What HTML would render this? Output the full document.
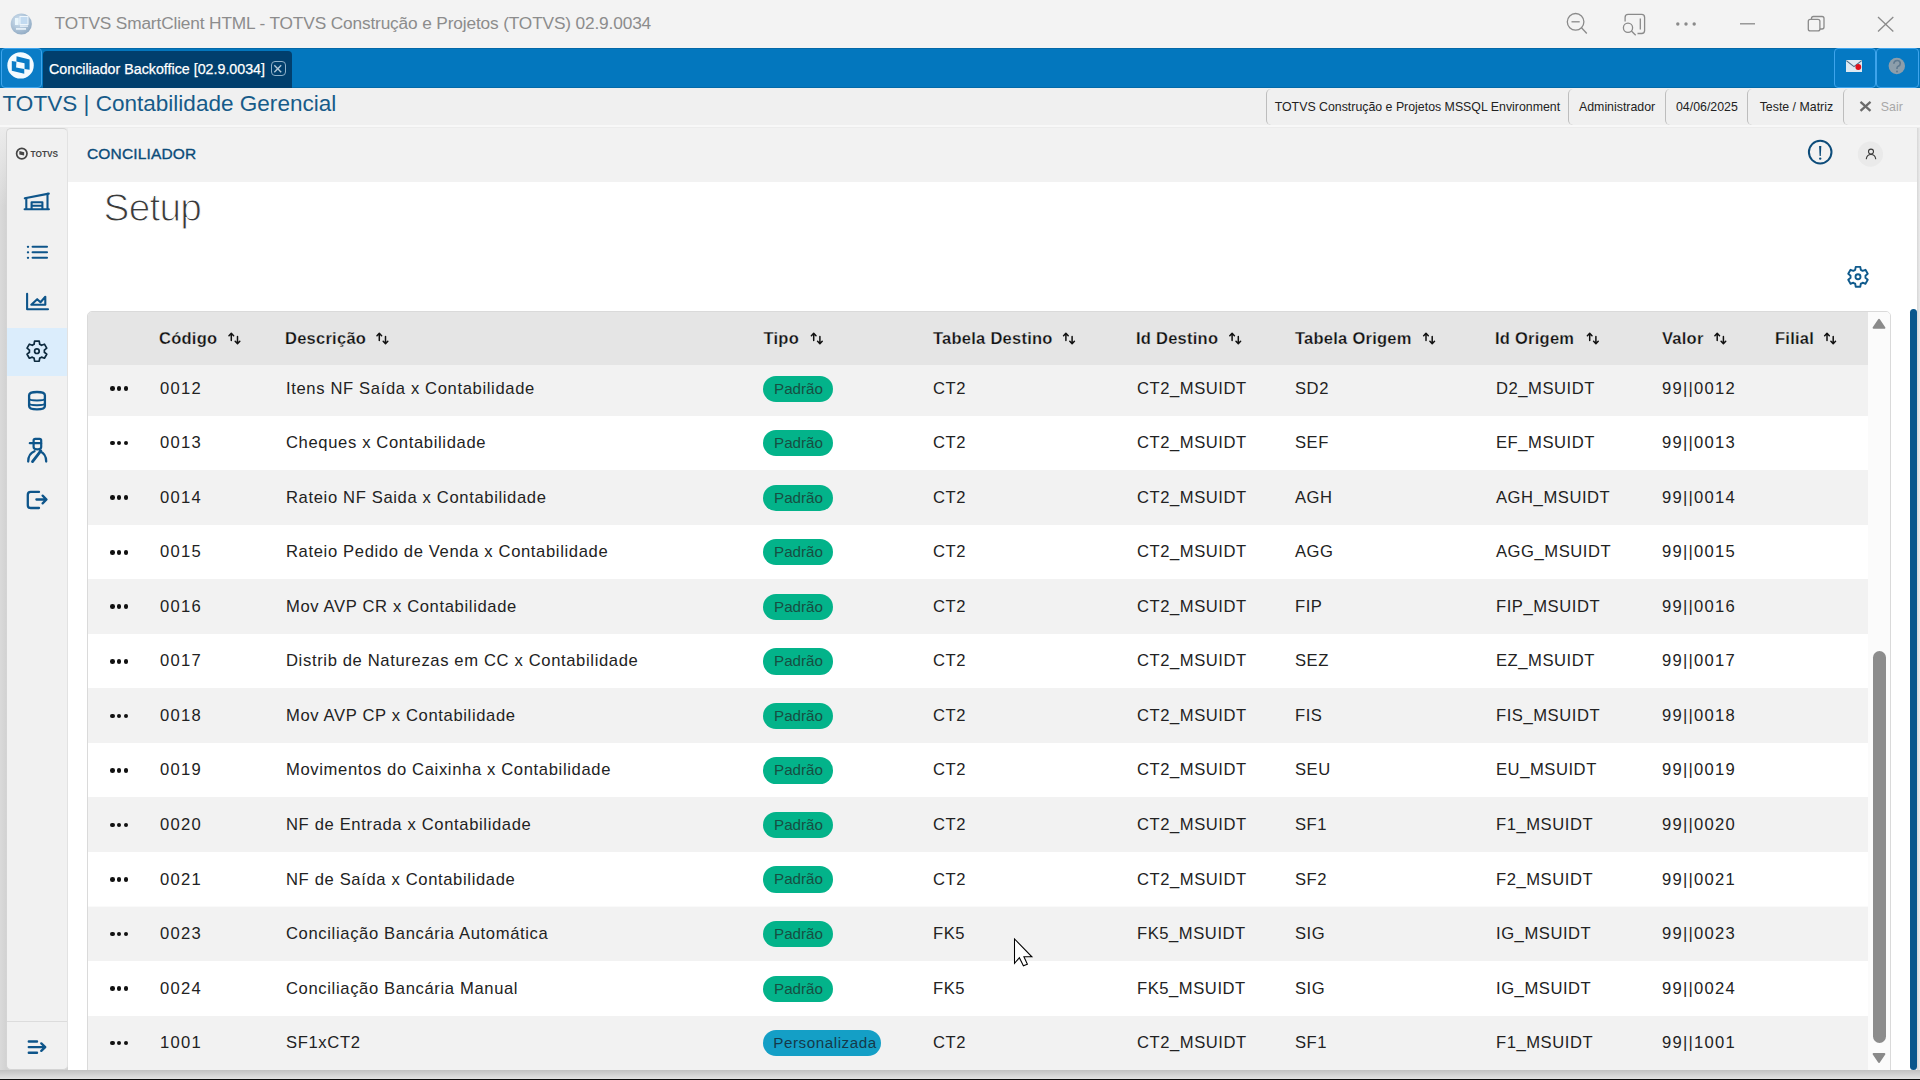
<!DOCTYPE html>
<html><head><meta charset="utf-8">
<style>
*{box-sizing:border-box;margin:0;padding:0}
html,body{width:1920px;height:1080px;overflow:hidden;background:#f3f3f3;font-family:"Liberation Sans",sans-serif;position:relative}
.abs{position:absolute}
svg{position:absolute;overflow:visible}
#ttl{left:54.6px;top:14.8px;font-size:17.3px;line-height:1;color:#8c8c8c;white-space:nowrap;letter-spacing:-0.15px}
#bluebar{left:0;top:47.6px;width:1920px;height:40.4px;background:#0377be;border-top:1px solid #0468a8;border-bottom:1px solid #036aa9}
#logobox{left:1px;top:48px;width:41px;height:40px;background:#0a7cc6;border:1px solid #3ea4ec;border-radius:4px}
#tab{left:43px;top:50.8px;width:249px;height:37px;background:#013f6d;border-radius:4px 4px 0 0}
#tabtxt{left:49px;top:62px;font-size:14.25px;line-height:1;color:#fff;-webkit-text-stroke:0.25px #fff;white-space:nowrap}
#tabx{left:270.5px;top:61px;width:15px;height:15px;border:1.3px solid #8fb0c8;border-radius:4px}
.tbtn{top:48px;width:42px;height:40px;border:1px solid #3ea4ec;border-radius:4px;background:#0579c3}
#hdr{left:0;top:88px;width:1920px;height:37px;background:#f0f0f0}
#hdrline{left:0;top:125px;width:1920px;height:2px;background:#f8f8f8}
#apptitle{left:2.5px;top:92.8px;font-size:22.55px;line-height:1;color:#175b89;white-space:nowrap}
.htab{top:88.6px;height:36px;border-left:1px solid #bdbdbd;border-radius:5px 0 0 5px;font-size:12.35px;line-height:36px;color:#222;white-space:nowrap;padding-left:8px}
#main{left:0;top:127px;width:1920px;height:953px;background:linear-gradient(180deg,#ececec 0px,rgba(236,236,236,0) 80px),linear-gradient(90deg,#dadada,#d2d2d2 6px)}
#sidebar{left:6px;top:128px;width:62px;height:942px;background:#f1f1f1;border:1px solid #d4d4d4;border-right-color:#e2e2e2;border-radius:5px}
#sbactive{left:7px;top:328px;width:60px;height:48px;background:#dbedfc}
#sbsep{left:7px;top:1021px;width:60px;height:1px;background:#dcdcdc}
#topbar{left:68px;top:128px;width:1849px;height:54px;background:#f2f2f2}
#content{left:68px;top:182px;width:1849px;height:888px;background:#fff}
#rightstrip{left:1917px;top:128px;width:3px;height:942px;background:linear-gradient(90deg,#d6d6d6,#ececec)}
#conc{left:87px;top:145.6px;font-size:15.5px;line-height:1;color:#0b4c79;-webkit-text-stroke:0.35px #0b4c79;letter-spacing:0.15px;white-space:nowrap}
#setup{left:103.5px;top:189.3px;font-size:38.8px;line-height:1;color:#3a3a3a;letter-spacing:-0.75px;-webkit-text-stroke:1.1px #fff;white-space:nowrap}
#tblbox{left:86.5px;top:310.5px;width:1804px;height:770px;border:1px solid #dadada;border-radius:5px;background:#fafafa}
#rows{left:0;top:0;width:0;height:0}
.row{position:absolute;left:88px;width:1780px;height:54.545px}
.c{position:absolute;top:0.6px;line-height:54.545px;font-size:16.6px;letter-spacing:0.55px;color:#222;white-space:nowrap}
.dots{position:absolute;top:25.2px;height:5px;width:18.2px;display:flex;justify-content:space-between}
.dots i{display:block;width:4.7px;height:4.7px;border-radius:50%;background:#111}
.tag{position:absolute;top:14.5px;height:26.3px;border-radius:13.2px;font-size:15.2px;line-height:26.3px;padding:0 0 0 11px;color:#174f42;white-space:nowrap}
.tag.p{background:#03b38a;width:70px}
.tag.c{background:#149fc6;color:#15394a;width:118px;padding-left:10.3px}
#thead{left:88px;top:311.5px;width:1780px;height:53px;background:#e5e5e5;border-radius:4px 0 0 0}
.h{position:absolute;top:0px;line-height:53.5px;font-size:16.5px;font-weight:700;color:#111;white-space:nowrap;letter-spacing:0.25px;-webkit-text-stroke:0.25px #e5e5e5}
.h svg{position:relative;display:inline-block;vertical-align:middle}
#sbtrack{left:1868px;top:311.5px;width:21.5px;height:758px;background:#fbfbfb;border-radius:0 4px 0 0}
#thumb{left:1873px;top:651px;width:13px;height:392px;background:#8c8c8c;border-radius:6.5px}
#outerbar{left:1909.5px;top:309px;width:7.5px;height:761px;background:#09578c;border-radius:4px}
#bottomshadow{left:0;top:1070px;width:1920px;height:9px;background:linear-gradient(#c2c2c2,#e4e4e4)}
#bottomline{left:0;top:1079px;width:1920px;height:1px;background:#111}
</style></head><body>
<!-- title bar -->
<svg style="left:0;top:0" width="1920" height="47">
 <defs><radialGradient id="ag" cx="0.4" cy="0.35" r="0.7"><stop offset="0" stop-color="#d6e6f4"/><stop offset="1" stop-color="#8fa9c2"/></radialGradient></defs>
 <circle cx="21.3" cy="24" r="10.6" fill="url(#ag)"/>
 <rect x="15" y="18" width="3.5" height="7" fill="#eaf6fc"/>
 <rect x="20" y="16.5" width="8" height="8" fill="#c2daf0" stroke="#eef6fc" stroke-width="1"/>
 <rect x="20" y="25.5" width="8" height="1.2" fill="#eef6fc"/>
 <rect x="16" y="28" width="10" height="1.8" fill="#e6f0f8"/>
 <g fill="none" stroke="#8a8a8a" stroke-width="1.3">
  <circle cx="1575.6" cy="21.8" r="8.3"/>
  <line x1="1571.5" y1="21.8" x2="1579.7" y2="21.8"/>
  <line x1="1581.5" y1="27.7" x2="1586.8" y2="33.5"/>
  <path d="M1625.1 21.6 V17.4 q0-3 3-3 H1641.6 q3 0 3 3 V30.5 q0 3 -3 3 H1637.5"/>
  <line x1="1640.3" y1="18.4" x2="1640.3" y2="29.6"/>
  <circle cx="1628" cy="27.7" r="4.6"/>
  <line x1="1631.4" y1="31" x2="1635.7" y2="35.3"/>
  <line x1="1740" y1="23.8" x2="1755" y2="23.8"/>
  <rect x="1808.3" y="19.3" width="11.6" height="11.6" rx="2"/>
  <path d="M1811.5 19 V18.5 q0-2 2-2 H1822 q2 0 2 2 V27 q0 2 -2 2 H1820"/>
  <line x1="1878" y1="17" x2="1893.3" y2="31.5"/>
  <line x1="1893.3" y1="17" x2="1878" y2="31.5"/>
 </g>
 <g fill="#8a8a8a"><circle cx="1677.8" cy="24" r="1.7"/><circle cx="1686" cy="24" r="1.7"/><circle cx="1694.2" cy="24" r="1.7"/></g>
</svg>
<div id="ttl" class="abs">TOTVS SmartClient HTML - TOTVS Construção e Projetos (TOTVS) 02.9.0034</div>
<!-- blue bar -->
<div id="bluebar" class="abs"></div>
<div id="logobox" class="abs"></div>
<svg style="left:0;top:47px" width="45" height="41">
 <circle cx="20.56" cy="18.4" r="13.2" fill="#f4fbff"/>
 <path d="M16.56 9.37 L29.6 12.48 L29.6 22.85 L24.56 21.96 L24.56 16.33 L16.4 14.56 Z" fill="#0a7cc6"/>
 <path d="M11.8 14.1 L16.4 14.85 L16.1 20.48 L24.26 21.96 L24.26 26.7 L11.8 23.74 Z" fill="#0a7cc6"/>
</svg>
<div id="tab" class="abs"></div>
<div id="tabtxt" class="abs">Conciliador Backoffice [02.9.0034]</div>
<div id="tabx" class="abs"></div>
<svg style="left:270px;top:61px" width="16" height="16"><g stroke="#b3c8d8" stroke-width="1.4"><line x1="4.3" y1="4.3" x2="11.2" y2="11.2"/><line x1="11.2" y1="4.3" x2="4.3" y2="11.2"/></g></svg>
<div class="abs tbtn" style="left:1834px"></div>
<div class="abs tbtn" style="left:1876px;width:43px"></div>
<svg style="left:1830px;top:47px" width="90" height="41">
 <rect x="16" y="13" width="16" height="12" fill="#dfe9f1"/>
 <path d="M16.3 13.6 L24 19.6 L31.7 13.6" fill="none" stroke="#4f6f88" stroke-width="1.2"/>
 <circle cx="28.3" cy="20" r="2.9" fill="#e0101a"/>
 <circle cx="66.8" cy="19" r="8.2" fill="#8d9eab"/>
 <path d="M63.8 16.8 q0.3-3.3 3.3-3.3 q3.2 0 3.2 3 q0 2-2.4 3 q-0.9 0.4-0.9 1.8 v0.8" fill="none" stroke="#5f7a90" stroke-width="1.6"/>
 <circle cx="67" cy="24.5" r="1" fill="#5f7a90"/>
</svg>
<!-- header -->
<div id="hdr" class="abs"></div>
<div id="hdrline" class="abs"></div>
<div id="apptitle" class="abs">TOTVS | Contabilidade Gerencial</div>
<div class="abs htab" style="left:1265.7px;width:302px">TOTVS Construção e Projetos MSSQL Environment</div>
<div class="abs htab" style="left:1567.5px;width:97px;padding-left:10.5px">Administrador</div>
<div class="abs htab" style="left:1664.5px;width:83px;padding-left:10.5px">04/06/2025</div>
<div class="abs htab" style="left:1747.3px;width:96px;padding-left:11.4px">Teste / Matriz</div>
<div class="abs htab" style="left:1843.3px;width:77px;padding-left:36.5px;color:#a8a8a8">Sair</div>
<svg style="left:1858px;top:99px" width="16" height="16"><g stroke="#6a6a6a" stroke-width="2.3"><line x1="2.5" y1="2.8" x2="12.5" y2="11.8"/><line x1="12.5" y1="2.8" x2="2.5" y2="11.8"/></g></svg>
<!-- main -->
<div id="main" class="abs"></div>
<div id="sidebar" class="abs"></div>
<div id="sbactive" class="abs"></div>
<div id="sbsep" class="abs"></div>
<svg style="left:0;top:0" width="70" height="1080">
 <!-- totvs logo -->
 <circle cx="21.8" cy="153.6" r="5.2" fill="none" stroke="#454545" stroke-width="1.7"/>
 <path d="M19.4 151.1 L24.2 152.3 L24.1 155.6 L19.3 154.5 Z" fill="#454545"/>
 <text x="30.6" y="157" font-family="Liberation Sans" font-weight="700" font-size="9.7" fill="#454545" textLength="27.5" lengthAdjust="spacingAndGlyphs">TOTVS</text>
 <g fill="none" stroke="#0e558a" stroke-width="2.1" stroke-linejoin="round" stroke-linecap="round">
  <!-- warehouse -->
  <path d="M24.8 198.3 L48.8 193.6"/>
  <path d="M26.3 198.2 V209.2 M47.5 193.8 V209.2 M24.6 209.3 H48.9"/>
  <path d="M31.6 209 V202.2 H42.4 V209 M31.6 205.7 H42.4"/>
  <!-- list -->
  <path d="M32.6 246.8 H47 M32.6 252.3 H47 M32.6 257.8 H47"/>
  <path d="M27.9 246.8 h0.2 M27.9 252.3 h0.2 M27.9 257.8 h0.2" stroke-width="2.2"/>
  <!-- chart -->
  <path d="M27.1 293.8 V309.3 H48"/>
  <path d="M31.3 304.8 L37.2 299.2 L40.5 302.2 L45.3 296.8 V304.8 Z"/>
  <!-- database -->
  <path d="M29.1 395.2 q0-3.2 7.9-3.2 q7.9 0 7.9 3.2 V406 q0 3.4-7.9 3.4 q-7.9 0-7.9-3.4 Z" stroke-width="2.3"/>
  <path d="M29.1 398.6 q0 1.9 7.9 1.9 q7.9 0 7.9-1.9 M29.1 403.3 q0 1.9 7.9 1.9 q7.9 0 7.9-1.9" stroke-width="2"/>
  <!-- person -->
  <path d="M33.6 443.2 V440.4 q0-1.6 1.6-1.6 H39.6 q1.6 0 1.6 1.6 V443.2 Z" stroke-width="2.2"/>
  <path d="M29.8 443.2 H34" stroke-width="2.2"/>
  <path d="M33.6 443.5 V447 q0 2.3 3.8 2.3 q3.8 0 3.8-2.3 V443.5" stroke-width="2.2"/>
  <path d="M28.2 461.6 q0-8 6.3-10.4 M46.2 461.6 q0-8-6.3-10.4" stroke-width="2.3"/>
  <path d="M32.5 461.6 L40.8 450.8" stroke-width="2.8"/>
  <!-- exit -->
  <path d="M39 491.9 H30.6 q-2.8 0-2.8 2.8 V505.2 q0 2.8 2.8 2.8 H39" stroke-width="2.3"/>
  <path d="M36.4 499.5 H46.3 M42.6 495.6 L46.5 499.5 L42.6 503.4" stroke-width="2.3"/>
  <!-- collapse -->
  <path d="M28.8 1041.5 H37 M28.8 1052.7 H37 M28.8 1047.1 H45 M41.3 1043.4 L45.2 1047.1 L41.3 1050.8" stroke-width="2.4"/>
 </g>
 <!-- gear active -->
 <g fill="none" stroke="#0d2a3e" stroke-width="1.7" stroke-linejoin="round">
  <path d="M34.09 344.25 L34.58 341.16 L39.22 341.16 L39.71 344.25 A7.5 7.5 0 0 1 41.52 345.29 L44.43 344.18 L46.75 348.19 L44.33 350.16 A7.5 7.5 0 0 1 44.33 352.24 L46.75 354.21 L44.43 358.22 L41.52 357.11 A7.5 7.5 0 0 1 39.71 358.15 L39.22 361.24 L34.58 361.24 L34.09 358.15 A7.5 7.5 0 0 1 32.28 357.11 L29.37 358.22 L27.05 354.21 L29.47 352.24 A7.5 7.5 0 0 1 29.47 350.16 L27.05 348.19 L29.37 344.18 L32.28 345.29 A7.5 7.5 0 0 1 34.09 344.25 Z"/>
  <circle cx="36.9" cy="351.2" r="2.3"/>
 </g>
</svg>
<div id="topbar" class="abs"></div>
<div id="content" class="abs"></div>
<div id="rightstrip" class="abs"></div>
<div id="conc" class="abs">CONCILIADOR</div>
<svg style="left:1790px;top:130px" width="120" height="50">
 <circle cx="30.2" cy="22.1" r="11.3" fill="none" stroke="#0d4c7a" stroke-width="2"/>
 <path d="M29.1 16 H31.3 L30.8 26 H29.6 Z" fill="#0d4c7a"/>
 <circle cx="30.2" cy="28.6" r="1.2" fill="#0d4c7a"/>
 <circle cx="80.4" cy="24.2" r="12.6" fill="#eaeaea"/>
 <circle cx="81" cy="21.6" r="2.5" fill="none" stroke="#3a3a3a" stroke-width="1.1"/>
 <path d="M76.3 28.8 q0.6-4.3 4.7-4.3 q4.1 0 4.7 4.3" fill="none" stroke="#3a3a3a" stroke-width="1.1" stroke-linecap="round"/>
</svg>
<div id="setup" class="abs">Setup</div>
<svg style="left:0;top:0" width="1920" height="400"><g fill="none" stroke="#0f5a8c" stroke-width="1.9" stroke-linejoin="round"><path d="M1855.19 269.85 L1855.71 266.86 L1860.29 266.86 L1860.81 269.85 A7.5 7.5 0 0 1 1862.62 270.89 L1865.46 269.84 L1867.75 273.82 L1865.43 275.76 A7.5 7.5 0 0 1 1865.43 277.84 L1867.75 279.78 L1865.46 283.76 L1862.62 282.71 A7.5 7.5 0 0 1 1860.81 283.75 L1860.29 286.74 L1855.71 286.74 L1855.19 283.75 A7.5 7.5 0 0 1 1853.38 282.71 L1850.54 283.76 L1848.25 279.78 L1850.57 277.84 A7.5 7.5 0 0 1 1850.57 275.76 L1848.25 273.82 L1850.54 269.84 L1853.38 270.89 A7.5 7.5 0 0 1 1855.19 269.85 Z"/><circle cx="1858" cy="276.8" r="2.5"/></g></svg>
<!-- table -->
<div id="tblbox" class="abs"></div>
<div id="rows" class="abs">
<div class="row" style="top:361.050px;background:#f2f2f2"><span class="dots" style="left:22px"><i></i><i></i><i></i></span><span class="c" style="left:72px;letter-spacing:1.25px">0012</span><span class="c" style="left:198px;letter-spacing:0.64px">Itens NF Saída x Contabilidade</span><span class="tag p" style="left:675px">Padrão</span><span class="c" style="left:845px">CT2</span><span class="c" style="left:1049px">CT2_MSUIDT</span><span class="c" style="left:1207px">SD2</span><span class="c" style="left:1408px">D2_MSUIDT</span><span class="c" style="left:1574px;letter-spacing:1.25px">99||0012</span></div>
<div class="row" style="top:415.595px;background:#ffffff"><span class="dots" style="left:22px"><i></i><i></i><i></i></span><span class="c" style="left:72px;letter-spacing:1.25px">0013</span><span class="c" style="left:198px;letter-spacing:0.64px">Cheques x Contabilidade</span><span class="tag p" style="left:675px">Padrão</span><span class="c" style="left:845px">CT2</span><span class="c" style="left:1049px">CT2_MSUIDT</span><span class="c" style="left:1207px">SEF</span><span class="c" style="left:1408px">EF_MSUIDT</span><span class="c" style="left:1574px;letter-spacing:1.25px">99||0013</span></div>
<div class="row" style="top:470.140px;background:#f2f2f2"><span class="dots" style="left:22px"><i></i><i></i><i></i></span><span class="c" style="left:72px;letter-spacing:1.25px">0014</span><span class="c" style="left:198px;letter-spacing:0.64px">Rateio NF Saida x Contabilidade</span><span class="tag p" style="left:675px">Padrão</span><span class="c" style="left:845px">CT2</span><span class="c" style="left:1049px">CT2_MSUIDT</span><span class="c" style="left:1207px">AGH</span><span class="c" style="left:1408px">AGH_MSUIDT</span><span class="c" style="left:1574px;letter-spacing:1.25px">99||0014</span></div>
<div class="row" style="top:524.685px;background:#ffffff"><span class="dots" style="left:22px"><i></i><i></i><i></i></span><span class="c" style="left:72px;letter-spacing:1.25px">0015</span><span class="c" style="left:198px;letter-spacing:0.64px">Rateio Pedido de Venda x Contabilidade</span><span class="tag p" style="left:675px">Padrão</span><span class="c" style="left:845px">CT2</span><span class="c" style="left:1049px">CT2_MSUIDT</span><span class="c" style="left:1207px">AGG</span><span class="c" style="left:1408px">AGG_MSUIDT</span><span class="c" style="left:1574px;letter-spacing:1.25px">99||0015</span></div>
<div class="row" style="top:579.230px;background:#f2f2f2"><span class="dots" style="left:22px"><i></i><i></i><i></i></span><span class="c" style="left:72px;letter-spacing:1.25px">0016</span><span class="c" style="left:198px;letter-spacing:0.64px">Mov AVP CR x Contabilidade</span><span class="tag p" style="left:675px">Padrão</span><span class="c" style="left:845px">CT2</span><span class="c" style="left:1049px">CT2_MSUIDT</span><span class="c" style="left:1207px">FIP</span><span class="c" style="left:1408px">FIP_MSUIDT</span><span class="c" style="left:1574px;letter-spacing:1.25px">99||0016</span></div>
<div class="row" style="top:633.775px;background:#ffffff"><span class="dots" style="left:22px"><i></i><i></i><i></i></span><span class="c" style="left:72px;letter-spacing:1.25px">0017</span><span class="c" style="left:198px;letter-spacing:0.64px">Distrib de Naturezas em CC x Contabilidade</span><span class="tag p" style="left:675px">Padrão</span><span class="c" style="left:845px">CT2</span><span class="c" style="left:1049px">CT2_MSUIDT</span><span class="c" style="left:1207px">SEZ</span><span class="c" style="left:1408px">EZ_MSUIDT</span><span class="c" style="left:1574px;letter-spacing:1.25px">99||0017</span></div>
<div class="row" style="top:688.320px;background:#f2f2f2"><span class="dots" style="left:22px"><i></i><i></i><i></i></span><span class="c" style="left:72px;letter-spacing:1.25px">0018</span><span class="c" style="left:198px;letter-spacing:0.64px">Mov AVP CP x Contabilidade</span><span class="tag p" style="left:675px">Padrão</span><span class="c" style="left:845px">CT2</span><span class="c" style="left:1049px">CT2_MSUIDT</span><span class="c" style="left:1207px">FIS</span><span class="c" style="left:1408px">FIS_MSUIDT</span><span class="c" style="left:1574px;letter-spacing:1.25px">99||0018</span></div>
<div class="row" style="top:742.865px;background:#ffffff"><span class="dots" style="left:22px"><i></i><i></i><i></i></span><span class="c" style="left:72px;letter-spacing:1.25px">0019</span><span class="c" style="left:198px;letter-spacing:0.64px">Movimentos do Caixinha x Contabilidade</span><span class="tag p" style="left:675px">Padrão</span><span class="c" style="left:845px">CT2</span><span class="c" style="left:1049px">CT2_MSUIDT</span><span class="c" style="left:1207px">SEU</span><span class="c" style="left:1408px">EU_MSUIDT</span><span class="c" style="left:1574px;letter-spacing:1.25px">99||0019</span></div>
<div class="row" style="top:797.410px;background:#f2f2f2"><span class="dots" style="left:22px"><i></i><i></i><i></i></span><span class="c" style="left:72px;letter-spacing:1.25px">0020</span><span class="c" style="left:198px;letter-spacing:0.64px">NF de Entrada x Contabilidade</span><span class="tag p" style="left:675px">Padrão</span><span class="c" style="left:845px">CT2</span><span class="c" style="left:1049px">CT2_MSUIDT</span><span class="c" style="left:1207px">SF1</span><span class="c" style="left:1408px">F1_MSUIDT</span><span class="c" style="left:1574px;letter-spacing:1.25px">99||0020</span></div>
<div class="row" style="top:851.955px;background:#ffffff"><span class="dots" style="left:22px"><i></i><i></i><i></i></span><span class="c" style="left:72px;letter-spacing:1.25px">0021</span><span class="c" style="left:198px;letter-spacing:0.64px">NF de Saída x Contabilidade</span><span class="tag p" style="left:675px">Padrão</span><span class="c" style="left:845px">CT2</span><span class="c" style="left:1049px">CT2_MSUIDT</span><span class="c" style="left:1207px">SF2</span><span class="c" style="left:1408px">F2_MSUIDT</span><span class="c" style="left:1574px;letter-spacing:1.25px">99||0021</span></div>
<div class="row" style="top:906.500px;background:#f2f2f2"><span class="dots" style="left:22px"><i></i><i></i><i></i></span><span class="c" style="left:72px;letter-spacing:1.25px">0023</span><span class="c" style="left:198px;letter-spacing:0.64px">Conciliação Bancária Automática</span><span class="tag p" style="left:675px">Padrão</span><span class="c" style="left:845px">FK5</span><span class="c" style="left:1049px">FK5_MSUIDT</span><span class="c" style="left:1207px">SIG</span><span class="c" style="left:1408px">IG_MSUIDT</span><span class="c" style="left:1574px;letter-spacing:1.25px">99||0023</span></div>
<div class="row" style="top:961.045px;background:#ffffff"><span class="dots" style="left:22px"><i></i><i></i><i></i></span><span class="c" style="left:72px;letter-spacing:1.25px">0024</span><span class="c" style="left:198px;letter-spacing:0.64px">Conciliação Bancária Manual</span><span class="tag p" style="left:675px">Padrão</span><span class="c" style="left:845px">FK5</span><span class="c" style="left:1049px">FK5_MSUIDT</span><span class="c" style="left:1207px">SIG</span><span class="c" style="left:1408px">IG_MSUIDT</span><span class="c" style="left:1574px;letter-spacing:1.25px">99||0024</span></div>
<div class="row" style="top:1015.590px;background:#f2f2f2"><span class="dots" style="left:22px"><i></i><i></i><i></i></span><span class="c" style="left:72px;letter-spacing:1.25px">1001</span><span class="c" style="left:198px;letter-spacing:0.64px">SF1xCT2</span><span class="tag c" style="left:675px">Personalizada</span><span class="c" style="left:845px">CT2</span><span class="c" style="left:1049px">CT2_MSUIDT</span><span class="c" style="left:1207px">SF1</span><span class="c" style="left:1408px">F1_MSUIDT</span><span class="c" style="left:1574px;letter-spacing:1.25px">99||1001</span></div></div>
<div id="thead" class="abs">
 <span class="h" style="left:71px">Código</span>
 <span class="h" style="left:197px">Descrição</span>
 <span class="h" style="left:675.5px">Tipo</span>
 <span class="h" style="left:845.0px">Tabela Destino</span>
 <span class="h" style="left:1048px">Id Destino</span>
 <span class="h" style="left:1207.0px">Tabela Origem</span>
 <span class="h" style="left:1407px">Id Origem</span>
 <span class="h" style="left:1574.0px">Valor</span>
 <span class="h" style="left:1687px">Filial</span>
</div>
<svg style="left:0;top:0" width="1920" height="1080" id="sorts">
 <path d="M231.3 340.6 V333.4 M229.0 335.7 L231.3 333.3 L233.6 335.7 M237.5 336.6 V343.6 M235.2 341.3 L237.5 343.7 L239.8 341.3 M379.3 340.6 V333.4 M377.0 335.7 L379.3 333.3 L381.6 335.7 M385.5 336.6 V343.6 M383.2 341.3 L385.5 343.7 L387.8 341.3 M813.7 340.6 V333.4 M811.4 335.7 L813.7 333.3 L816.0 335.7 M819.9 336.6 V343.6 M817.6 341.3 L819.9 343.7 L822.2 341.3 M1065.9 340.6 V333.4 M1063.6 335.7 L1065.9 333.3 L1068.2 335.7 M1072.1 336.6 V343.6 M1069.8 341.3 L1072.1 343.7 L1074.4 341.3 M1232.1 340.6 V333.4 M1229.8 335.7 L1232.1 333.3 L1234.4 335.7 M1238.3 336.6 V343.6 M1236.0 341.3 L1238.3 343.7 L1240.6 341.3 M1426.0 340.6 V333.4 M1423.7 335.7 L1426.0 333.3 L1428.3 335.7 M1432.2 336.6 V343.6 M1429.9 341.3 L1432.2 343.7 L1434.5 341.3 M1589.7 340.6 V333.4 M1587.4 335.7 L1589.7 333.3 L1592.0 335.7 M1595.9 336.6 V343.6 M1593.6 341.3 L1595.9 343.7 L1598.2 341.3 M1717.2 340.6 V333.4 M1714.9 335.7 L1717.2 333.3 L1719.5 335.7 M1723.4 336.6 V343.6 M1721.1 341.3 L1723.4 343.7 L1725.7 341.3 M1827.0 340.6 V333.4 M1824.7 335.7 L1827.0 333.3 L1829.3 335.7 M1833.2 336.6 V343.6 M1830.9 341.3 L1833.2 343.7 L1835.5 341.3" fill="none" stroke="#111" stroke-width="1.5" stroke-linecap="round" stroke-linejoin="round"/>
</svg>
<div id="sbtrack" class="abs"></div>
<svg style="left:1868px;top:311px" width="22" height="760">
 <path d="M5.6 16.8 L11 8.8 L16.4 16.8 Z" fill="#8a8a8a" stroke="#8a8a8a" stroke-width="2" stroke-linejoin="round"/>
 <path d="M5.6 743 L11 751 L16.4 743 Z" fill="#8a8a8a" stroke="#8a8a8a" stroke-width="2" stroke-linejoin="round"/>
</svg>
<div id="thumb" class="abs"></div>
<div id="outerbar" class="abs"></div>
<div id="bottomshadow" class="abs"></div>
<div id="bottomline" class="abs"></div>
<!-- cursor -->
<svg style="left:1014px;top:938px" width="22" height="32">
 <path d="M0.5 1 V25.3 L5.4 19.7 L9.4 27.8 L13.4 26.3 L9.9 18.8 H17.9 Z" fill="#fff" stroke="#000" stroke-width="1.05" stroke-linejoin="miter"/>
</svg>
</body></html>
